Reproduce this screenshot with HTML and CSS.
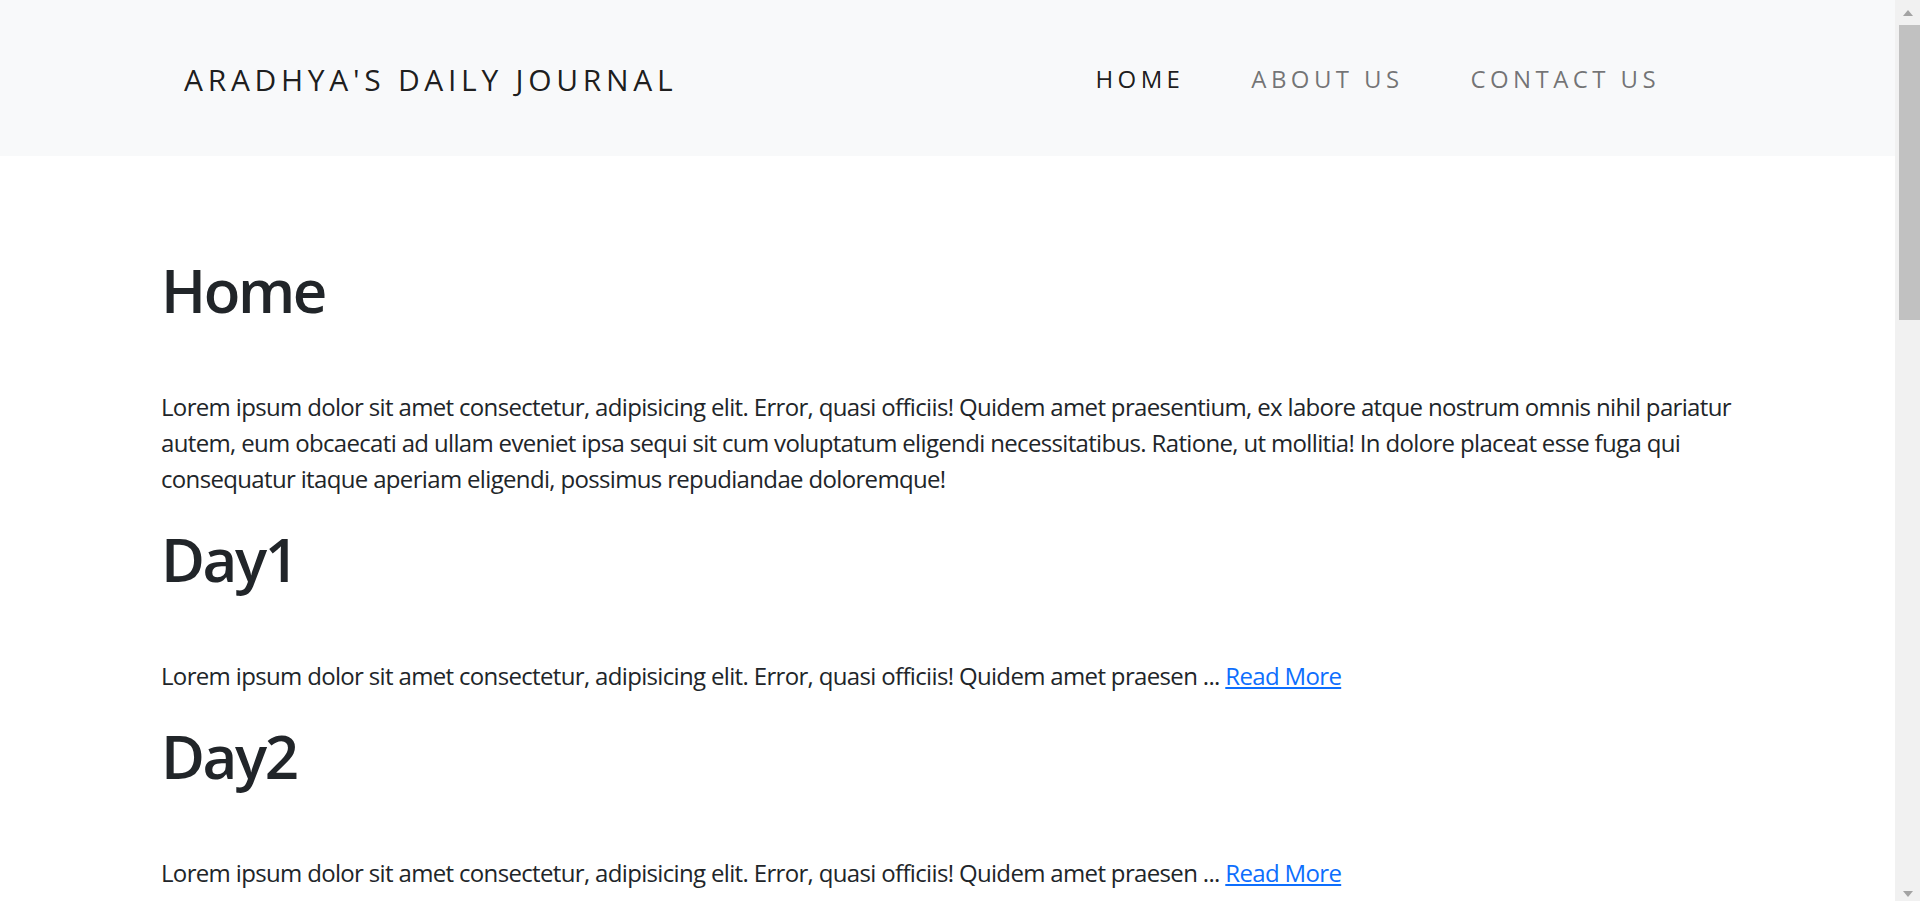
FILE: index.html
```html
<!DOCTYPE html>
<html lang="en">
<head>
<meta charset="utf-8">
<title>Aradhya's Daily Journal</title>
<link rel="stylesheet" href="styles.css">
</head>
<body>
<div class="page">
  <header class="navbar">
    <a class="brand" href="#">ARADHYA'S DAILY JOURNAL</a>
    <nav class="nav">
      <a class="nav-link active" href="#">HOME</a>
      <a class="nav-link" href="#">ABOUT US</a>
      <a class="nav-link" href="#">CONTACT US</a>
    </nav>
  </header>
  <main class="content">
    <h1 class="title">Home</h1>
    <p class="text">Lorem ipsum dolor sit amet consectetur, adipisicing elit. Error, quasi officiis! Quidem amet praesentium, ex labore atque nostrum omnis nihil pariatur autem, eum obcaecati ad ullam eveniet ipsa sequi sit cum voluptatum eligendi necessitatibus. Ratione, ut mollitia! In dolore placeat esse fuga qui consequatur itaque aperiam eligendi, possimus repudiandae doloremque!</p>

    <h1 class="title">Day1</h1>
    <p class="text">Lorem ipsum dolor sit amet consectetur, adipisicing elit. Error, quasi officiis! Quidem amet praesen ... <a class="more" href="#">Read More</a></p>

    <h1 class="title">Day2</h1>
    <p class="text">Lorem ipsum dolor sit amet consectetur, adipisicing elit. Error, quasi officiis! Quidem amet praesen ... <a class="more" href="#">Read More</a></p>

    <h1 class="title">Day3</h1>
    <p class="text">Lorem ipsum dolor sit amet consectetur, adipisicing elit. Error, quasi officiis! Quidem amet praesen ... <a class="more" href="#">Read More</a></p>
  </main>
</div>
<div class="scrollbar" aria-hidden="true">
  <span class="arrow arrow-up"></span>
  <span class="thumb"></span>
  <span class="track"></span>
  <span class="arrow arrow-down"></span>
</div>
</body>
</html>
```
FILE: styles.css
```css
html, body {
  margin: 0;
  padding: 0;
  height: 901px;
  overflow: hidden;
}
body {
  display: flex;
  font-family: "Open Sans", "Noto Sans", sans-serif;
  color: #212529;
  background: #fff;
  font-size: 24px;
  line-height: 36px;
}
.page {
  flex: 1;
  min-width: 0;
  height: 901px;
  overflow: hidden;
}
.navbar {
  display: flex;
  align-items: flex-start;
  justify-content: space-between;
  height: 156px;
  background: #f8f9fa;
  padding: 0 235px 0 184px;
  box-sizing: border-box;
}
.brand {
  margin-top: 60px;
  font-size: 30px;
  line-height: 40px;
  letter-spacing: 4.7px;
  color: rgba(0, 0, 0, 0.9);
  text-decoration: none;
}
.nav {
  display: flex;
  gap: 67px;
  margin-top: 61px;
}
.nav-link {
  font-size: 24px;
  line-height: 36px;
  letter-spacing: 4.4px;
  color: rgba(0, 0, 0, 0.55);
  text-decoration: none;
}
.nav-link.active {
  color: rgba(0, 0, 0, 0.9);
}
.content {
  width: 1590px;
  margin-left: 161px;
  padding-top: 98px;
}
.title {
  font-size: 60px;
  line-height: 72px;
  font-weight: 600;
  letter-spacing: -2.4px;
  margin: 0 0 63px;
}
.text {
  margin: 0 0 26px;
  letter-spacing: -0.66px;
}
.more {
  color: #0d6efd;
  text-decoration: underline;
}
.scrollbar {
  width: 25px;
  flex: none;
  height: 901px;
  background: #f1f1f1;
  display: flex;
  flex-direction: column;
  align-items: center;
}
.arrow {
  width: 0;
  height: 0;
  border-left: 5.5px solid transparent;
  border-right: 5.5px solid transparent;
  flex: none;
}
.arrow-up {
  margin-top: 10px;
  border-bottom: 6px solid #a3a3a3;
}
.arrow-down {
  margin-bottom: 4px;
  border-top: 6px solid #a3a3a3;
}
.thumb {
  margin-top: 9px;
  width: 21px;
  height: 295px;
  margin-left: 4px;
  background: #c1c1c1;
  flex: none;
}
.track {
  flex: 1;
}
```
